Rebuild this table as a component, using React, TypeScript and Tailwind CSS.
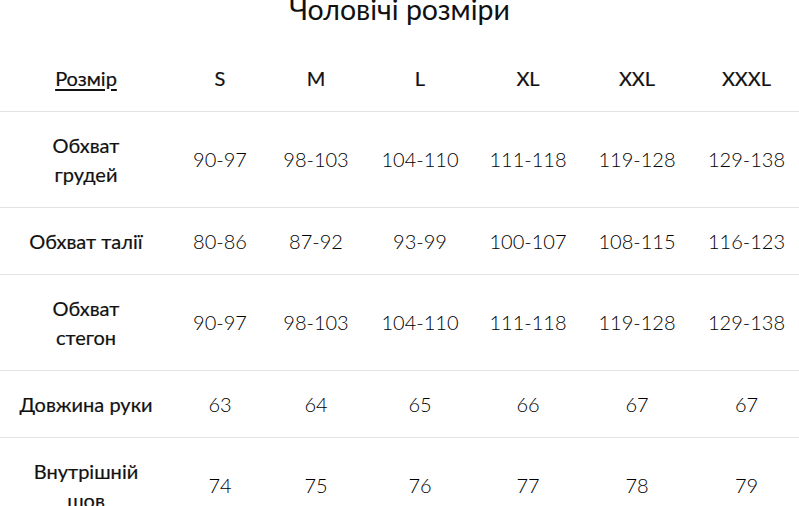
import React from 'react'

const SIZES = ['S', 'M', 'L', 'XL', 'XXL', 'XXXL']

const ROWS: { label: React.ReactNode; values: string[] }[] = [
  { label: <>Обхват<br />грудей</>, values: ['90-97', '98-103', '104-110', '111-118', '119-128', '129-138'] },
  { label: 'Обхват талії', values: ['80-86', '87-92', '93-99', '100-107', '108-115', '116-123'] },
  { label: <>Обхват<br />стегон</>, values: ['90-97', '98-103', '104-110', '111-118', '119-128', '129-138'] },
  { label: 'Довжина руки', values: ['63', '64', '65', '66', '67', '67'] },
  { label: <>Внутрішній<br />шов</>, values: ['74', '75', '76', '77', '78', '79'] },
]

const COLS = ['w-[172px]', 'w-[96px]', 'w-[96px]', 'w-[112px]', 'w-[104px]', 'w-[114px]', 'w-[105px]']

export default function App() {
  return (
    <div className="w-[799px] h-[506px] overflow-hidden bg-white text-[#111] font-['Lato',sans-serif]">
      <h2 className="text-center text-[28.5px] leading-[34px] -mt-[8px] h-[53px]">Чоловічі розміри</h2>
      <table className="w-full table-fixed border-collapse text-[20px] leading-[29px]">
        <colgroup>
          {COLS.map((c, i) => <col key={i} className={c} />)}
        </colgroup>
        <thead>
          <tr className="border-b border-[#e3e3e3]">
            <th className="py-[18.5px] text-center font-normal [-webkit-text-stroke:0.2px]">
              <a className="underline underline-offset-[3px]">Розмір</a>
            </th>
            {SIZES.map(s => (
              <th key={s} className="py-[18.5px] text-center font-normal [-webkit-text-stroke:0.2px]">{s}</th>
            ))}
          </tr>
        </thead>
        <tbody>
          {ROWS.map((r, i) => (
            <tr key={i} className="border-b border-[#e3e3e3]">
              <td className="py-[18.5px] text-center font-normal [-webkit-text-stroke:0.2px]">{r.label}</td>
              {r.values.map((v, j) => (
                <td key={j} className="py-[18.5px] text-center font-light text-black">{v}</td>
              ))}
            </tr>
          ))}
        </tbody>
      </table>
    </div>
  )
}
